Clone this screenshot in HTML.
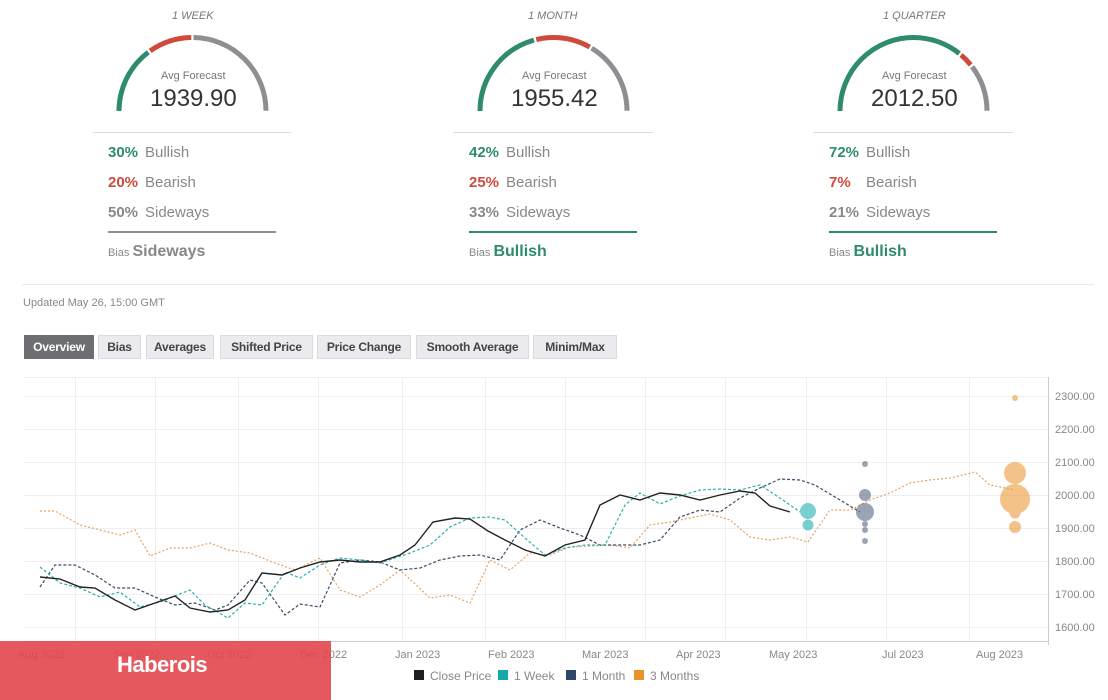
<!DOCTYPE html>
<html><head><meta charset="utf-8"><style>
*{margin:0;padding:0;box-sizing:border-box}
body{width:1108px;height:700px;background:#fff;font-family:"Liberation Sans",sans-serif;position:relative;overflow:hidden;color:#888}
.a{position:absolute;white-space:nowrap}
.per{font-size:11px;font-style:italic;color:#777}
.avg{font-size:11px;color:#777}
.val{font-size:24px;color:#333;font-weight:normal}
.row{font-size:15px;color:#888}
.row b{display:inline-block;width:37px}
.bias{font-size:11px;color:#888}
.bias b{font-size:16px}
.tab{position:absolute;top:335px;height:24px;background:#ebebef;border:1px solid #dcdce0;font-size:12px;font-weight:bold;color:#444;text-align:center;line-height:22px;letter-spacing:-0.2px}
</style></head><body>

<svg class="a" style="left:0;top:0" width="1108" height="290">
<g fill="none" stroke-width="5">
 <g transform="translate(192.5,0)">
  <path d="M-73.5 111 A73.5 73.5 0 0 1 73.5 111" pathLength="100" stroke="#2e8b6e" stroke-dasharray="29.5 200"/>
  <path d="M-73.5 111 A73.5 73.5 0 0 1 73.5 111" pathLength="100" stroke="#cf4a3a" stroke-dasharray="0 30.5 19 200"/>
  <path d="M-73.5 111 A73.5 73.5 0 0 1 73.5 111" pathLength="100" stroke="#8e8e93" stroke-dasharray="0 50.5 49.5 200"/>
 </g>
 <g transform="translate(553.5,0)">
  <path d="M-73.5 111 A73.5 73.5 0 0 1 73.5 111" pathLength="100" stroke="#2e8b6e" stroke-dasharray="41.5 200"/>
  <path d="M-73.5 111 A73.5 73.5 0 0 1 73.5 111" pathLength="100" stroke="#cf4a3a" stroke-dasharray="0 42.5 24 200"/>
  <path d="M-73.5 111 A73.5 73.5 0 0 1 73.5 111" pathLength="100" stroke="#8e8e93" stroke-dasharray="0 67.5 32.5 200"/>
 </g>
 <g transform="translate(913.5,0)">
  <path d="M-73.5 111 A73.5 73.5 0 0 1 73.5 111" pathLength="100" stroke="#2e8b6e" stroke-dasharray="71.5 200"/>
  <path d="M-73.5 111 A73.5 73.5 0 0 1 73.5 111" pathLength="100" stroke="#cf4a3a" stroke-dasharray="0 72.5 6 200"/>
  <path d="M-73.5 111 A73.5 73.5 0 0 1 73.5 111" pathLength="100" stroke="#8e8e93" stroke-dasharray="0 79.5 20.5 200"/>
 </g>
</g>
<g stroke="#ddd" stroke-width="1">
 <line x1="92" y1="132.5" x2="292" y2="132.5"/>
 <line x1="453" y1="132.5" x2="653" y2="132.5"/>
 <line x1="813" y1="132.5" x2="1013" y2="132.5"/>
 <line x1="22" y1="284.5" x2="1094" y2="284.5" stroke="#e8e8e8"/>
</g>
<line x1="108" y1="232" x2="276" y2="232" stroke="#8e8e93" stroke-width="2"/>
<line x1="469" y1="232" x2="637" y2="232" stroke="#2e8b6e" stroke-width="2"/>
<line x1="829" y1="232" x2="997" y2="232" stroke="#2e8b6e" stroke-width="2"/>
</svg>

<div class="a per" style="left:172px;top:10px">1 WEEK</div>
<div class="a avg" style="left:161px;top:70px">Avg Forecast</div>
<div class="a val" style="left:150px;top:85px">1939.90</div>
<div class="a row" style="left:108px;top:144px"><b style="color:#2e8b6e">30%</b>Bullish</div>
<div class="a row" style="left:108px;top:174px"><b style="color:#cf4a3a">20%</b>Bearish</div>
<div class="a row" style="left:108px;top:204px"><b style="color:#888">50%</b>Sideways</div>
<div class="a bias" style="left:108px;top:243px">Bias <b style="color:#888">Sideways</b></div>

<div class="a per" style="left:528px;top:10px">1 MONTH</div>
<div class="a avg" style="left:522px;top:70px">Avg Forecast</div>
<div class="a val" style="left:511px;top:85px">1955.42</div>
<div class="a row" style="left:469px;top:144px"><b style="color:#2e8b6e">42%</b>Bullish</div>
<div class="a row" style="left:469px;top:174px"><b style="color:#cf4a3a">25%</b>Bearish</div>
<div class="a row" style="left:469px;top:204px"><b style="color:#888">33%</b>Sideways</div>
<div class="a bias" style="left:469px;top:243px">Bias <b style="color:#2e8b6e">Bullish</b></div>

<div class="a per" style="left:883px;top:10px">1 QUARTER</div>
<div class="a avg" style="left:882px;top:70px">Avg Forecast</div>
<div class="a val" style="left:871px;top:85px">2012.50</div>
<div class="a row" style="left:829px;top:144px"><b style="color:#2e8b6e">72%</b>Bullish</div>
<div class="a row" style="left:829px;top:174px"><b style="color:#cf4a3a">7%</b>Bearish</div>
<div class="a row" style="left:829px;top:204px"><b style="color:#888">21%</b>Sideways</div>
<div class="a bias" style="left:829px;top:243px">Bias <b style="color:#2e8b6e">Bullish</b></div>

<div class="a" style="left:23px;top:297px;font-size:11px;color:#888">Updated May 26, 15:00 GMT</div>

<div class="tab" style="left:24px;width:70px;background:#6d6e71;border-color:#6d6e71;color:#fff">Overview</div>
<div class="tab" style="left:98px;width:43px">Bias</div>
<div class="tab" style="left:146px;width:68px">Averages</div>
<div class="tab" style="left:220px;width:93px">Shifted Price</div>
<div class="tab" style="left:317px;width:94px">Price Change</div>
<div class="tab" style="left:416px;width:113px">Smooth Average</div>
<div class="tab" style="left:533px;width:84px">Minim/Max</div>

<svg class="a" style="left:0;top:370px" width="1108" height="330" viewBox="0 370 1108 330">
<g stroke="#efeff2" stroke-width="1">
 <line x1="24" y1="396.5" x2="1048" y2="396.5"/><line x1="24" y1="429.5" x2="1048" y2="429.5"/>
 <line x1="24" y1="462.5" x2="1048" y2="462.5"/><line x1="24" y1="495.5" x2="1048" y2="495.5"/>
 <line x1="24" y1="528.5" x2="1048" y2="528.5"/><line x1="24" y1="561.5" x2="1048" y2="561.5"/>
 <line x1="24" y1="594.5" x2="1048" y2="594.5"/><line x1="24" y1="627.5" x2="1048" y2="627.5"/>
 <line x1="24" y1="377.5" x2="1048" y2="377.5"/>
 <line x1="75.5" y1="377" x2="75.5" y2="641"/><line x1="155.5" y1="377" x2="155.5" y2="641"/>
 <line x1="238.5" y1="377" x2="238.5" y2="641"/><line x1="318.5" y1="377" x2="318.5" y2="641"/>
 <line x1="402.5" y1="377" x2="402.5" y2="641"/><line x1="485.5" y1="377" x2="485.5" y2="641"/>
 <line x1="565.5" y1="377" x2="565.5" y2="641"/><line x1="645.5" y1="377" x2="645.5" y2="641"/>
 <line x1="725.5" y1="377" x2="725.5" y2="641"/><line x1="806.5" y1="377" x2="806.5" y2="641"/>
 <line x1="886.5" y1="377" x2="886.5" y2="641"/><line x1="969.5" y1="377" x2="969.5" y2="641"/>
</g>
<line x1="1048.5" y1="377" x2="1048.5" y2="645" stroke="#ccc"/>
<line x1="24" y1="641.5" x2="1048" y2="641.5" stroke="#ccc"/>
<g font-size="11" fill="#888" font-family="Liberation Sans,sans-serif">
 <text x="1055" y="400">2300.00</text><text x="1055" y="433">2200.00</text><text x="1055" y="466">2100.00</text>
 <text x="1055" y="499">2000.00</text><text x="1055" y="532">1900.00</text><text x="1055" y="565">1800.00</text>
 <text x="1055" y="598">1700.00</text><text x="1055" y="631">1600.00</text>
 <text x="18" y="658">Aug 2022</text><text x="113" y="658">Sep 2022</text><text x="207" y="658">Oct 2022</text>
 <text x="300" y="658">Dec 2022</text><text x="395" y="658">Jan 2023</text><text x="488" y="658">Feb 2023</text>
 <text x="582" y="658">Mar 2023</text><text x="676" y="658">Apr 2023</text><text x="769" y="658">May 2023</text>
 <text x="882" y="658">Jul 2023</text><text x="976" y="658">Aug 2023</text>
</g>
<g fill="none" stroke-width="1.2">
<polyline stroke="#e8a060" stroke-dasharray="2 2" points="40,511 55,511 80,525 100,530 120,535 135,530 150,556 170,548 190,548 210,543 228,550 250,553 275,563 295,570 320,558 340,590 360,597 380,585 400,570 430,598 450,595 470,603 490,560 510,570 530,553 550,555 570,547 590,546 610,545 630,548 650,525 670,522 690,518 710,514 730,520 750,537 770,540 790,537 808,542 830,510 850,510 870,500 890,493 910,483 930,480 950,478 975,472 990,485 1015,490"/>
<polyline stroke="#3a4a66" stroke-dasharray="3 2" points="40,587 55,565 75,565 95,575 115,588 135,588 155,597 175,605 195,603 215,610 228,605 250,580 262,583 285,615 300,604 320,607 340,563 360,560 380,562 400,570 420,568 440,560 460,556 480,555 500,560 520,530 540,520 560,528 580,535 600,545 620,545 640,545 660,540 680,517 700,510 720,512 740,498 760,488 780,479 800,480 815,485 840,500 860,512"/>
<polyline stroke="#2fb0b0" stroke-dasharray="3 2" points="40,567 60,583 80,588 100,597 120,592 140,607 160,602 190,590 205,605 228,618 245,603 262,605 285,572 300,578 320,565 340,558 360,560 380,563 410,553 430,545 450,527 470,518 490,517 505,520 525,538 545,555 565,548 585,545 605,545 625,505 640,493 660,504 680,496 700,490 720,489 740,490 760,485 780,498 800,512"/>
<polyline stroke="#222" stroke-width="1.4" points="40,577 60,579 80,587 95,588 115,600 135,610 155,603 175,596 190,608 210,612 228,610 245,600 262,573 282,575 300,568 320,562 340,560 360,562 380,562 400,555 415,545 433,522 455,518 470,519 488,531 505,540 525,550 545,556 565,545 585,540 600,505 620,495 640,500 660,493 680,495 700,500 720,495 740,491 755,493 770,506 790,512"/>
</g>
<g fill="#20b2b2" opacity="0.6">
 <circle cx="808" cy="511" r="8"/><circle cx="808" cy="510" r="6"/><circle cx="808" cy="525" r="5.5"/>
</g>
<g fill="#4a5a7a" opacity="0.55">
 <circle cx="865" cy="464" r="3"/><circle cx="865" cy="495" r="6"/><circle cx="865" cy="512" r="9"/><circle cx="865" cy="506" r="3"/>
 <circle cx="865" cy="517" r="3.5"/><circle cx="865" cy="524" r="3"/><circle cx="865" cy="530" r="3"/><circle cx="865" cy="541" r="3"/>
</g>
<g fill="#eb9a3c" opacity="0.6">
 <circle cx="1015" cy="398" r="3"/><circle cx="1015" cy="473" r="11"/><circle cx="1015" cy="499" r="15"/>
 <circle cx="1015" cy="513" r="5.5"/><circle cx="1015" cy="527" r="6"/>
</g>
<rect x="414" y="670" width="10" height="10" fill="#1b1e22"/>
<rect x="498" y="670" width="10" height="10" fill="#17a9a9"/>
<rect x="566" y="670" width="10" height="10" fill="#2e4668"/>
<rect x="634" y="670" width="10" height="10" fill="#e8922a"/>
<g font-size="12" fill="#888" font-family="Liberation Sans,sans-serif">
 <text x="430" y="680">Close Price</text><text x="514" y="680">1 Week</text>
 <text x="582" y="680">1 Month</text><text x="650" y="680">3 Months</text>
</g>
</svg>

<div class="a" style="left:0;top:641px;width:331px;height:59px;background:#e2474d;opacity:0.9"></div>
<div class="a" style="left:117px;top:652px;font-size:22px;font-weight:bold;color:#fff;letter-spacing:-0.5px">Haberois</div>
</body></html>
